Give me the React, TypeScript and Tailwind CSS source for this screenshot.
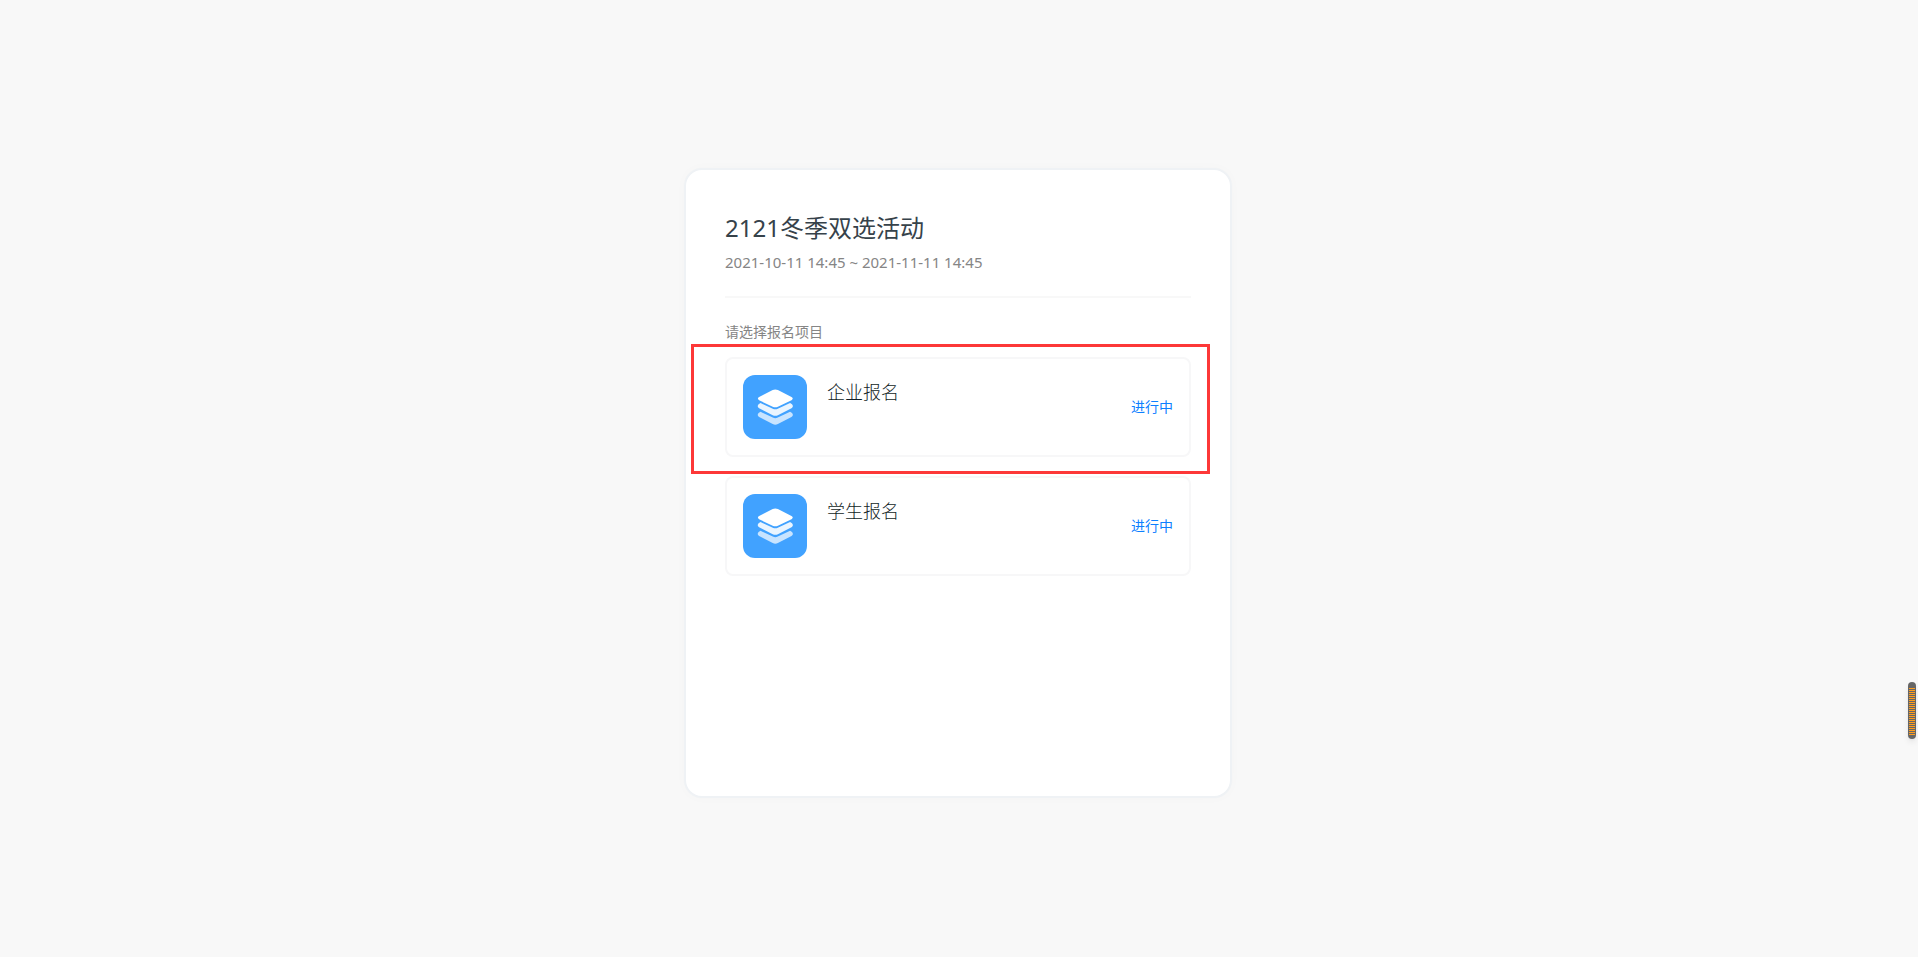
const projects = [
  { name: "企业报名", status: "进行中", marked: true },
  { name: "学生报名", status: "进行中", marked: false },
];

function LayersIcon() {
  return (
    <svg viewBox="0 0 64 64" className="size-16 shrink-0" aria-hidden="true">
      <rect width="64" height="64" rx="12" fill="#41a2ff" />
      <path
        d="M17.5 36.8 L29.8 42.6 Q32.3 43.7 34.8 42.6 L47.1 36.8 L49 38 Q51 40.3 48.5 42 L34.9 49 Q32.3 50.3 29.7 49 L16.1 42 Q13.6 40.3 15.6 38Z"
        fill="#c8e4ff"
      />
      <path
        d="M17.5 28 L29.8 33.8 Q32.3 34.9 34.8 33.8 L47.1 28 L49 29.2 Q51 31.5 48.5 33.2 L34.9 40.2 Q32.3 41.5 29.7 40.2 L16.1 33.2 Q13.6 31.5 15.6 29.2Z"
        fill="#eaf5ff"
      />
      <path
        d="M29.7 15.1 Q32.3 13.7 34.9 15.1 L48.5 21.9 Q51 23.6 48.5 25.3 L34.9 31.7 Q32.3 33 29.7 31.7 L16.1 25.3 Q13.6 23.6 16.1 21.9Z"
        fill="#ffffff"
      />
    </svg>
  );
}

function ProjectCard({ name, status, marked }: (typeof projects)[number]) {
  return (
    <li className="relative">
      <a
        href="#"
        className="flex items-center rounded-lg border-2 border-[#f7f7f8] p-4"
      >
        <LayersIcon />
        <h2 className="ml-5 flex-1 self-start text-lg leading-[34px] font-light text-[#121e26]">
          {name}
        </h2>
        <span className="text-sm text-[#0c80ff]">{status}</span>
      </a>

      {/* Highlight frame around the card */}
      {marked && (
        <div className="pointer-events-none absolute -top-[13px] -right-[19px] -bottom-[17px] -left-[34px] border-3 border-[#fd3838]" />
      )}
    </li>
  );
}

export default function App() {
  return (
    <main
      className="flex min-h-screen items-center justify-center bg-[#f8f8f8] pt-2 pr-0.5"
      style={{
        fontFamily: "'Noto Sans', 'Noto Sans CJK SC', sans-serif",
      }}
    >
      <section className="min-h-[630px] w-full max-w-[548px] rounded-[18px] border-2 border-[#eff2f5] bg-white px-[39px] py-10 shadow-[0_0_12px_rgba(0,40,30,0.02)]">
        <header className="border-b-2 border-[#f8f8f8] pb-[22px]">
          <h1 className="text-2xl leading-9 text-[#36424a]">
            2121冬季双选活动
          </h1>
          <p className="mt-1 text-[15px] leading-6 text-[#858585]">
            2021-10-11 14:45 ~ 2021-11-11 14:45
          </p>
        </header>

        <p className="mt-6 text-sm leading-5 text-[#858585]">请选择报名项目</p>
        <ul className="mt-[15px] space-y-[19px]">
          {projects.map((project) => (
            <ProjectCard key={project.name} {...project} />
          ))}
        </ul>
      </section>

      {/* Docked side meter */}
      <div className="fixed top-[682px] right-0.5 h-[57px] w-2 rounded-full bg-[#666666] px-px pt-1.5 pb-1 shadow-md">
        <div className="h-full bg-[repeating-linear-gradient(to_bottom,#ff9d1e_0_1px,#666666_1px_2px)]" />
      </div>
    </main>
  );
}
